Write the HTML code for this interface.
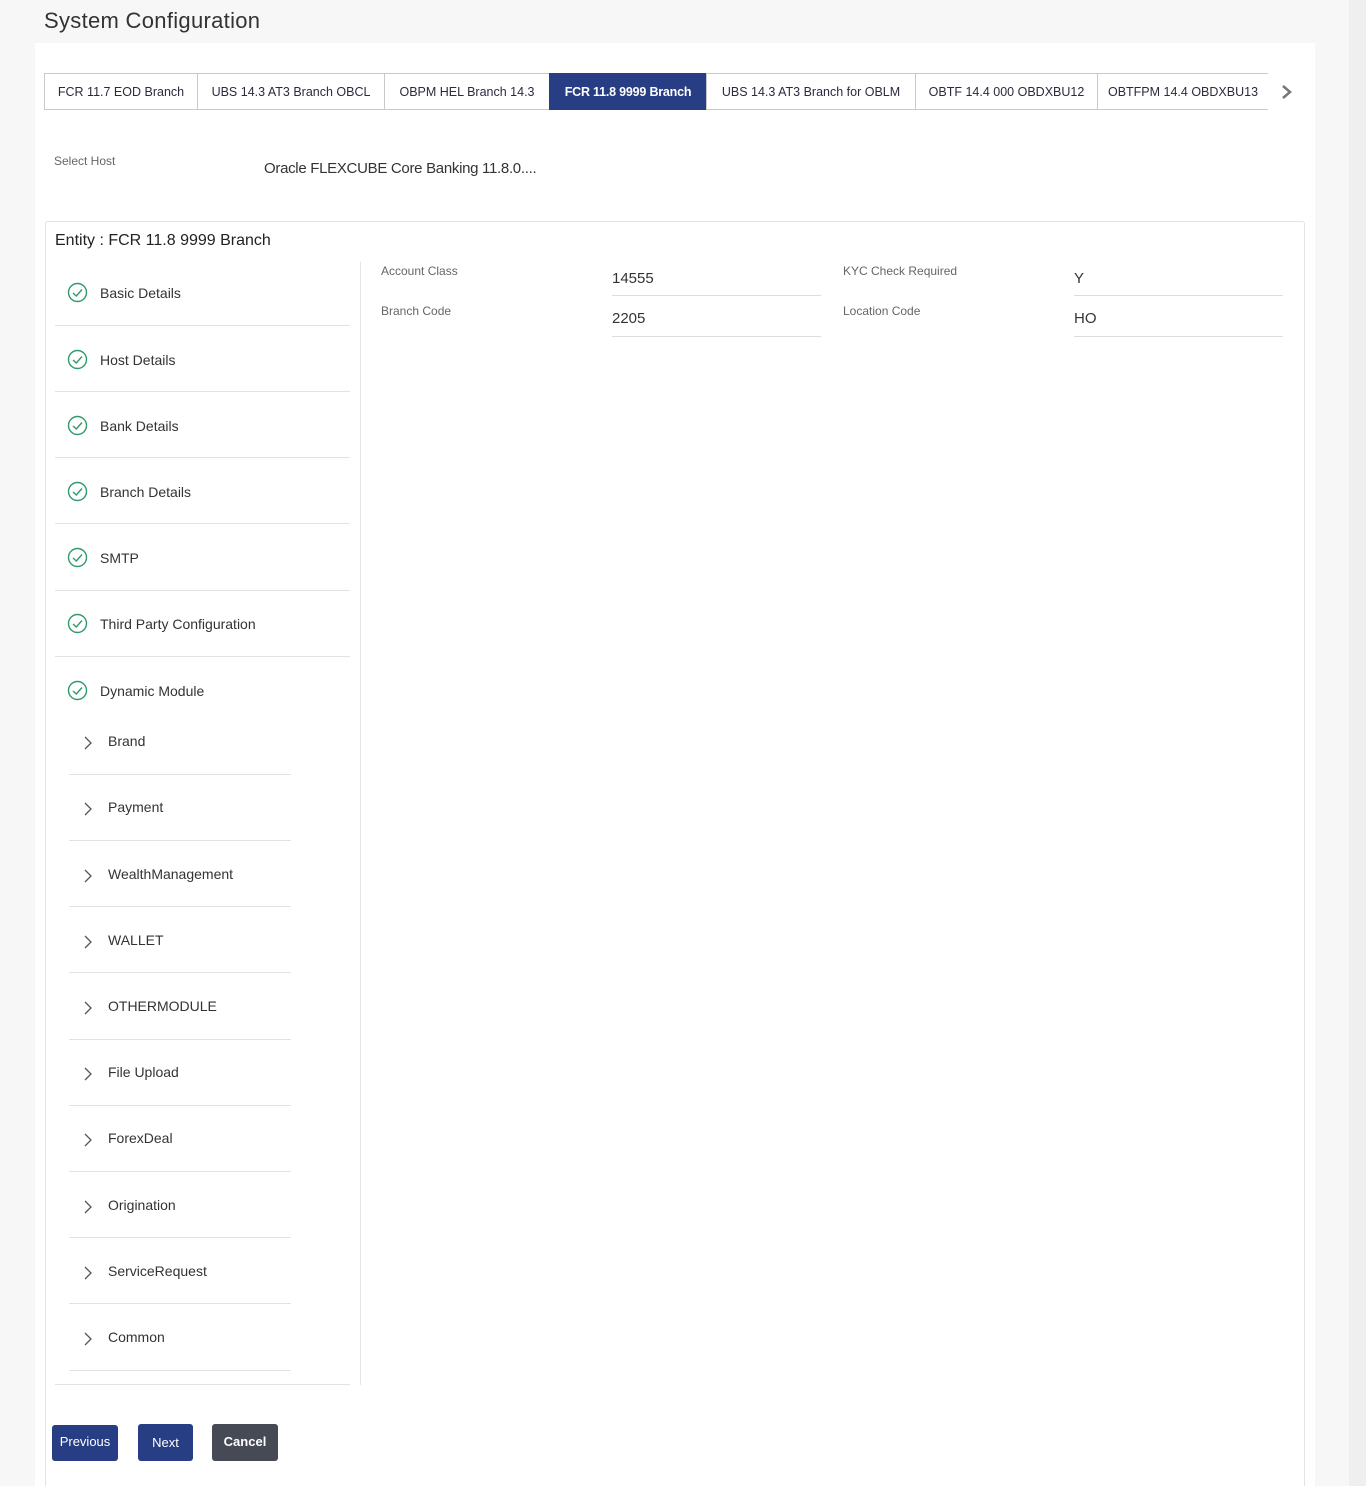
<!DOCTYPE html>
<html style="width:1366px;height:1486px;overflow:hidden"><head><meta charset="utf-8">
<style>
*{margin:0;padding:0;box-sizing:border-box}
body{width:1366px;height:1486px;background:#f7f7f7;font-family:"Liberation Sans",Arial,sans-serif;color:#333;position:relative;overflow:hidden}
.a{position:absolute;white-space:nowrap}
.scroll{position:absolute;left:1349px;top:0;width:17px;height:1486px;background:#efefef}
.panel{position:absolute;left:35px;top:43px;width:1280px;height:1443px;background:#fff}
.tab{position:absolute;top:73px;height:37px;border:1px solid #c9c9c9;font-size:12.5px;color:#2b2b40;line-height:36px;text-align:center;background:#fff}
.tab.on{background:#283e84;color:#fff;border-color:#283e84;font-weight:bold;letter-spacing:-0.2px}
.box{position:absolute;left:45px;top:221px;width:1260px;height:1265px;border:1px solid #e3e3e3;border-bottom:none;border-radius:3px 3px 0 0}
.item{position:absolute;font-size:14px;color:#333}
.hr{position:absolute;height:1px;background:#e2e2e2}
.lbl{position:absolute;font-size:12px;color:#666}
.val{position:absolute;font-size:15px;color:#333}
.btn{position:absolute;border-radius:3px;color:#fff;font-size:13px;text-align:center}
</style></head><body>
<div class="scroll"></div>
<div class="a" style="left:44px;top:8px;font-size:22px;color:#333;letter-spacing:0.3px">System Configuration</div>
<div class="panel"></div>
<div class="tab" style="left:44px;width:154px">FCR 11.7 EOD Branch</div>
<div class="tab" style="left:197px;width:188px">UBS 14.3 AT3 Branch OBCL</div>
<div class="tab" style="left:384px;width:166px">OBPM HEL Branch 14.3</div>
<div class="tab on" style="left:549px;width:158px">FCR 11.8 9999 Branch</div>
<div class="tab" style="left:706px;width:210px">UBS 14.3 AT3 Branch for OBLM</div>
<div class="tab" style="left:915px;width:183px">OBTF 14.4 000 OBDXBU12</div>
<div class="tab" style="left:1097px;width:171px;border-right:none">OBTFPM 14.4 OBDXBU13</div>
<svg class="a" style="left:1280px;top:84px" width="14" height="16"><path d="M3 2 L10 8 L3 14" stroke="#777" stroke-width="2.5" fill="none"/></svg>
<div class="a" style="left:54px;top:154px;font-size:12px;color:#666">Select Host</div>
<div class="a" style="left:264px;top:160px;font-size:15px;color:#333;letter-spacing:-0.3px">Oracle FLEXCUBE Core Banking 11.8.0....</div>
<div class="box"></div>
<div class="a" style="left:55px;top:232px;font-size:16px;color:#222">Entity : FCR 11.8 9999 Branch</div>
<div class="a" style="left:360px;top:262px;width:1px;height:1123px;background:#e6e6e6"></div>
<div class="hr" style="left:55px;top:1384px;width:295px"></div>

<div class="lbl" style="left:381px;top:264px">Account Class</div>
<div class="val" style="left:612px;top:270px">14555</div>
<div class="hr" style="left:612px;top:295px;width:209px;background:#ddd"></div>
<div class="lbl" style="left:381px;top:304px">Branch Code</div>
<div class="val" style="left:612px;top:310px">2205</div>
<div class="hr" style="left:612px;top:336px;width:209px;background:#ddd"></div>
<div class="lbl" style="left:843px;top:264px">KYC Check Required</div>
<div class="val" style="left:1074px;top:270px">Y</div>
<div class="hr" style="left:1074px;top:295px;width:209px;background:#ddd"></div>
<div class="lbl" style="left:843px;top:304px">Location Code</div>
<div class="val" style="left:1074px;top:310px">HO</div>
<div class="hr" style="left:1074px;top:336px;width:209px;background:#ddd"></div>

<div id="menu"></div>
<script>
var m=document.getElementById('menu'),h='';
var main=[["Basic Details",293,325],["Host Details",360,391],["Bank Details",426,457],["Branch Details",492,523],["SMTP",558,590],["Third Party Configuration",624,656],["Dynamic Module",691,null]];
main.forEach(function(r){
h+='<svg class="a" style="left:67px;top:'+(r[1]-11)+'px" width="21" height="21"><circle cx="10.5" cy="10.5" r="9" stroke="#2f9a6a" stroke-width="1.4" fill="none"/><path d="M6 11 L9.3 14 L15 7.5" stroke="#2f9a6a" stroke-width="1.4" fill="none"/></svg>';
h+='<div class="item a" style="left:100px;top:'+(r[1]-8)+'px">'+r[0]+'</div>';
if(r[2])h+='<div class="hr" style="left:55px;top:'+r[2]+'px;width:295px"></div>';
});
var sub=[["Brand",741,774],["Payment",807,840],["WealthManagement",874,906],["WALLET",940,972],["OTHERMODULE",1006,1039],["File Upload",1072,1105],["ForexDeal",1138,1171],["Origination",1205,1237],["ServiceRequest",1271,1303],["Common",1337,1370]];
sub.forEach(function(r){
h+='<svg class="a" style="left:82px;top:'+(r[1]-6)+'px" width="12" height="16"><path d="M3 2 L9 8 L3 14" stroke="#555" stroke-width="1.3" fill="none"/></svg>';
h+='<div class="item a" style="left:108px;top:'+(r[1]-8)+'px">'+r[0]+'</div>';
h+='<div class="hr" style="left:69px;top:'+r[2]+'px;width:222px"></div>';
});
m.innerHTML=h;
</script>
<div class="btn" style="left:52px;top:1425px;width:66px;height:36px;line-height:33px;background:#283e84">Previous</div>
<div class="btn" style="left:138px;top:1424px;width:55px;height:37px;line-height:38px;background:#283e84">Next</div>
<div class="btn" style="left:212px;top:1424px;width:66px;height:37px;line-height:35px;background:#454a55;font-weight:bold">Cancel</div>
</body></html>
